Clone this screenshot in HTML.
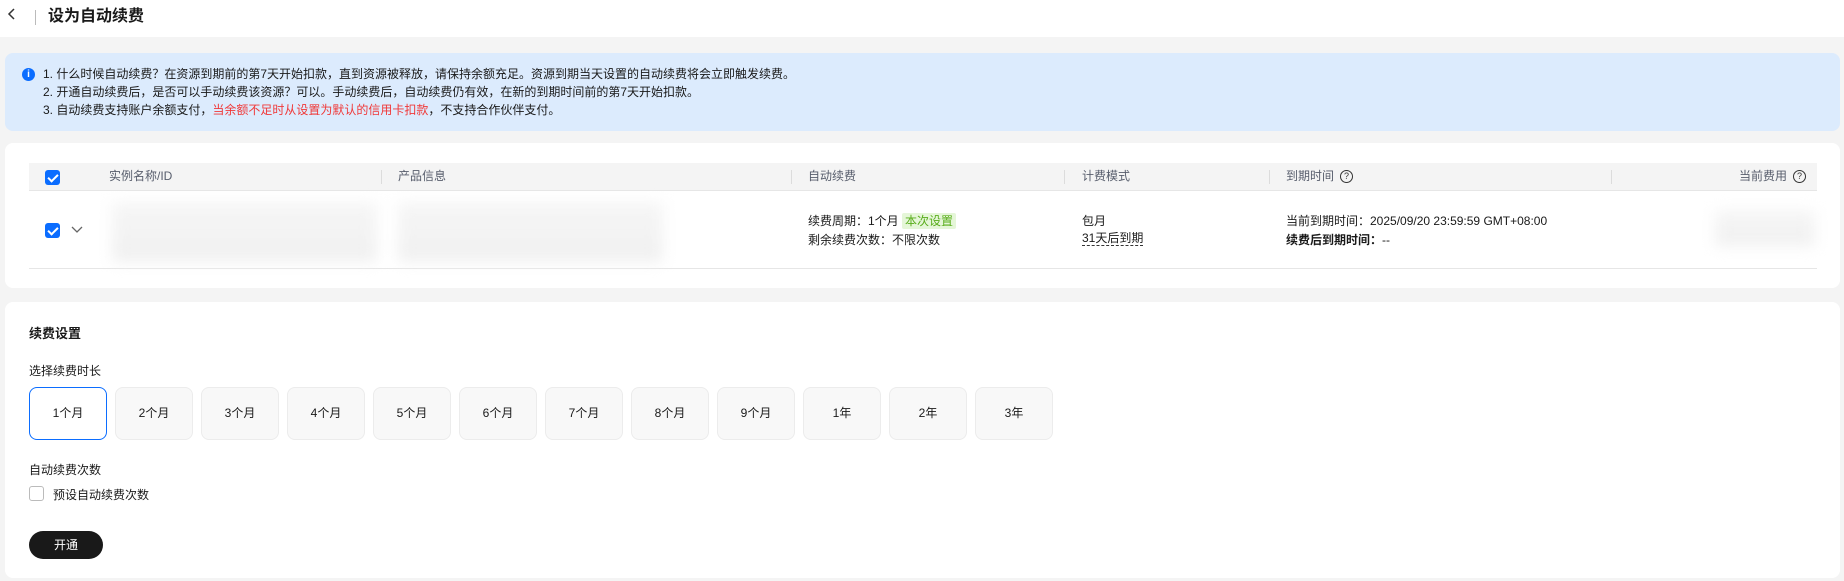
<!DOCTYPE html>
<html><head><meta charset="utf-8"><style>
*{box-sizing:border-box;margin:0;padding:0}
body{width:1844px;height:581px;background:#f4f4f4;font-family:"Liberation Sans","Noto Sans CJK SC",sans-serif;color:#191919;font-size:12px;position:relative;overflow:hidden}
.a{position:absolute;white-space:nowrap}
.hdr{position:absolute;left:0;top:0;width:1844px;height:37px;background:#fff}
.info{position:absolute;left:5px;top:53px;width:1835px;height:78px;background:#dcebfd;border-radius:8px}
.card{position:absolute;background:#fff;border-radius:8px}
.th{position:absolute;left:29px;top:163px;width:1788px;height:28px;background:#f4f4f4;border-bottom:1px solid #e6e6e6}
.th .a{top:4px;color:#575d6c;font-size:12px}
.div{position:absolute;top:7px;width:1px;height:14px;background:#dcdcdc}
.cb{position:absolute;width:15px;height:15px;border-radius:3px;background:#0b6dff}
.cb:after{content:"";position:absolute;left:5px;top:2px;width:4px;height:8px;border:solid #fff;border-width:0 2px 2px 0;transform:rotate(45deg)}
.blur{position:absolute;background:linear-gradient(#f6f6f6,#f0f0f0);filter:blur(7px)}
.q{display:inline-block;width:13px;height:13px;border:1.3px solid #333;border-radius:50%;font-size:9px;line-height:11px;text-align:center;vertical-align:middle;margin-left:6px;color:#333}
.btn{position:absolute;top:387px;width:78px;height:53px;background:#f8f8f8;border:1px solid #ececec;border-radius:8px;text-align:center;line-height:51px;font-size:12px}
</style></head><body>
<div class="hdr"></div>
<svg class="a" style="left:7px;top:7px" width="10" height="14"><path d="M7 2 L2 7 L7 12" fill="none" stroke="#333" stroke-width="1.5"/></svg>
<div class="a" style="left:35px;top:10px;width:1px;height:15px;background:#bbb"></div>
<div class="a" style="left:48px;top:2px;font-size:16px;font-weight:bold">设为自动续费</div>

<div class="info"></div>
<div class="a" style="left:22px;top:68px;width:13px;height:13px;border-radius:50%;background:#0b6dff;color:#fff;font-size:10px;font-weight:bold;text-align:center;line-height:13px">i</div>
<div class="a" style="left:43px;top:65px;line-height:18px;font-size:12px">1. 什么时候自动续费？在资源到期前的第7天开始扣款，直到资源被释放，请保持余额充足。资源到期当天设置的自动续费将会立即触发续费。<br>2. 开通自动续费后，是否可以手动续费该资源？可以。手动续费后，自动续费仍有效，在新的到期时间前的第7天开始扣款。<br>3. 自动续费支持账户余额支付，<span style="color:#f03838">当余额不足时从设置为默认的信用卡扣款</span>，不支持合作伙伴支付。</div>

<div class="card" style="left:5px;top:143px;width:1835px;height:145px"></div>
<div class="th">
<div class="cb" style="left:16px;top:7px"></div>
<div class="a" style="left:80px">实例名称/ID</div>
<div class="div" style="left:352px"></div><div class="a" style="left:369px">产品信息</div>
<div class="div" style="left:762px"></div><div class="a" style="left:779px">自动续费</div>
<div class="div" style="left:1035px"></div><div class="a" style="left:1053px">计费模式</div>
<div class="div" style="left:1240px"></div><div class="a" style="left:1257px;top:4px">到期时间<span class="q">?</span></div>
<div class="div" style="left:1582px"></div><div class="a" style="right:11px;top:4px">当前费用<span class="q">?</span></div>
</div>
<div class="a" style="left:29px;top:268px;width:1788px;height:1px;background:#e6e6e6"></div>
<div class="cb" style="left:45px;top:223px"></div>
<svg class="a" style="left:71px;top:226px" width="12" height="8"><path d="M1 1 L6 6 L11 1" fill="none" stroke="#666" stroke-width="1.3"/></svg>
<div class="blur" style="left:112px;top:202px;width:265px;height:60px"></div>
<div class="blur" style="left:398px;top:202px;width:265px;height:60px"></div>
<div class="blur" style="left:1715px;top:210px;width:100px;height:36px"></div>
<div class="a" style="left:808px;top:212px">续费周期：1个月 <span style="background:#e5f6d8;color:#58ad1a;padding:1px 3px;border-radius:2px">本次设置</span></div>
<div class="a" style="left:808px;top:231px">剩余续费次数：不限次数</div>
<div class="a" style="left:1082px;top:212px">包月</div>
<div class="a" style="left:1082px;top:231px;border-bottom:1px dashed #333;line-height:14px">31天后到期</div>
<div class="a" style="left:1286px;top:212px">当前到期时间：2025/09/20 23:59:59 GMT+08:00</div>
<div class="a" style="left:1286px;top:231px"><b>续费后到期时间：</b>--</div>

<div class="card" style="left:5px;top:302px;width:1835px;height:276px"></div>
<div class="a" style="left:29px;top:323px;font-size:13px;font-weight:bold">续费设置</div>
<div class="a" style="left:29px;top:362px">选择续费时长</div>
<div class="btn" style="left:29px;background:#fff;border:1px solid #0b6dff">1个月</div>
<div class="btn" style="left:115px">2个月</div>
<div class="btn" style="left:201px">3个月</div>
<div class="btn" style="left:287px">4个月</div>
<div class="btn" style="left:373px">5个月</div>
<div class="btn" style="left:459px">6个月</div>
<div class="btn" style="left:545px">7个月</div>
<div class="btn" style="left:631px">8个月</div>
<div class="btn" style="left:717px">9个月</div>
<div class="btn" style="left:803px">1年</div>
<div class="btn" style="left:889px">2年</div>
<div class="btn" style="left:975px">3年</div>
<div class="a" style="left:29px;top:461px">自动续费次数</div>
<div class="a" style="left:29px;top:486px;width:15px;height:15px;border:1px solid #bbb;border-radius:3px;background:#fff"></div>
<div class="a" style="left:53px;top:486px">预设自动续费次数</div>
<div class="a" style="left:29px;top:531px;width:74px;height:28px;background:#191919;color:#fff;border-radius:14px;text-align:center;line-height:28px">开通</div>
</body></html>
